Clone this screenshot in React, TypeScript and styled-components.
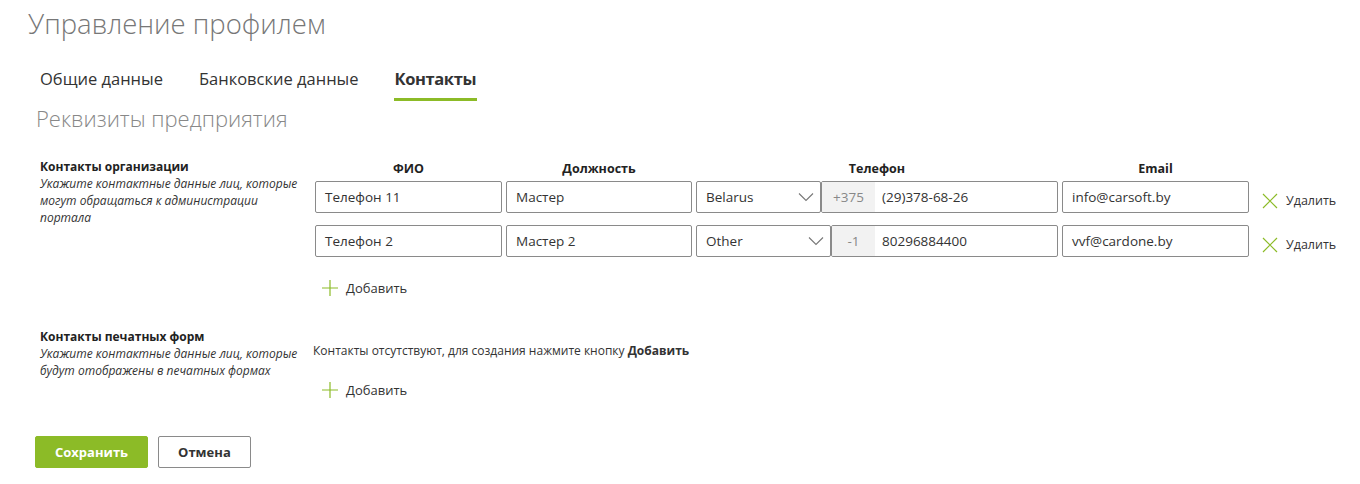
import styled, { createGlobalStyle } from "styled-components";

const GlobalStyle = createGlobalStyle`
  html, body {
    margin: 0;
    padding: 0;
    background: #fff;
    font-family: "Open Sans", "Noto Sans", sans-serif;
    color: #333;
  }
`;

const green = "#8cbb27";

interface ContactRow {
  name: string;
  position: string;
  country: string;
  code: string;
  phone: string;
  email: string;
}

const orgContacts: ContactRow[] = [
  {
    name: "Телефон 11",
    position: "Мастер",
    country: "Belarus",
    code: "+375",
    phone: "(29)378-68-26",
    email: "info@carsoft.by",
  },
  {
    name: "Телефон 2",
    position: "Мастер 2",
    country: "Other",
    code: "-1",
    phone: "80296884400",
    email: "vvf@cardone.by",
  },
];

const Page = styled.div`
  padding: 4px 0 16px 28px;
  width: 1332px;
  box-sizing: border-box;
`;

const Title = styled.h1`
  margin: 0;
  font-size: 27.5px;
  font-weight: 300;
  color: #777;
  line-height: 40px;
`;

const Tabs = styled.nav`
  display: flex;
  gap: 34px;
  margin: 21px 0 0 11px;
`;

const Tab = styled.div<{ $active?: boolean }>`
  font-size: 16.5px;
  line-height: 22px;
  padding: 3px 1px 8px;
  color: #333;
  font-weight: ${(p) => (p.$active ? 700 : 400)};
  letter-spacing: ${(p) => (p.$active ? "-0.4px" : "0")};
  border-bottom: 3px solid ${(p) => (p.$active ? green : "transparent")};
`;

const Subtitle = styled.h2`
  margin: 1px 0 0 8px;
  font-size: 22px;
  font-weight: 300;
  color: #888;
  line-height: 32px;
`;

const Section = styled.section<{ $gap: number }>`
  display: grid;
  grid-template-columns: 275px 1fr;
  margin: ${(p) => p.$gap}px 0 0 12px;
`;

const SectionInfo = styled.div`
  font-size: 12px;
  line-height: 17px;
  padding-right: 6px;
`;

const SectionName = styled.div`
  font-weight: 700;
  color: #222;
`;

const SectionHint = styled.div`
  font-style: italic;
  color: #333;
`;

const SectionBody = styled.div`
  display: flex;
  flex-direction: column;
`;

const TableGrid = styled.div`
  display: grid;
  grid-template-columns: 187px 186px 362px 187px auto;
  column-gap: 4px;
  row-gap: 12px;
  align-items: center;
`;

const HeaderCell = styled.div`
  font-size: 12.5px;
  font-weight: 700;
  text-align: center;
  color: #222;
  line-height: 17px;
  padding-top: 2px;
  margin-bottom: -8px;
`;

const Field = styled.div`
  height: 32px;
  border: 1px solid #8a8a8a;
  border-radius: 2px;
  box-sizing: border-box;
  display: flex;
  align-items: center;
  padding: 0 9px;
  font-size: 13.5px;
  color: #333;
  white-space: nowrap;
  overflow: hidden;
`;

const PhoneGroup = styled.div`
  display: flex;
  height: 32px;
`;

const Select = styled(Field)`
  flex: 1;
  justify-content: space-between;
  padding-right: 6px;
`;

const PhoneBox = styled.div`
  display: flex;
  border: 1px solid #8a8a8a;
  border-radius: 2px;
  box-sizing: border-box;
  height: 32px;
  overflow: hidden;
`;

const Prefix = styled.div`
  background: #f2f2f2;
  color: #888;
  font-size: 13.5px;
  display: flex;
  align-items: center;
  justify-content: center;
  padding: 0 11px;
  min-width: 21px;
`;

const PhoneInput = styled.div`
  width: 182px;
  display: flex;
  align-items: center;
  padding: 0 7px;
  box-sizing: border-box;
  font-size: 13.5px;
  color: #333;
`;

const LinkButton = styled.div`
  display: flex;
  align-items: center;
  gap: 8px;
  font-size: 13px;
  color: #333;
  cursor: pointer;
`;

const DeleteButton = styled(LinkButton)`
  padding: 7px 0 0 9px;
  font-size: 12.5px;
`;

const AddButton = styled(LinkButton)`
  margin: 22px 0 0 7px;
`;

const EmptyNote = styled.div`
  font-size: 12px;
  color: #333;
  margin: 14px 0 0 -2px;

  b {
    font-weight: 700;
  }
`;

const Actions = styled.div`
  display: flex;
  gap: 10px;
  margin: 37px 0 0 7px;
`;

const Button = styled.button<{ $primary?: boolean }>`
  height: 32px;
  padding: 0 19px;
  font-family: inherit;
  font-size: 13px;
  font-weight: 700;
  border-radius: 2px;
  cursor: pointer;
  background: ${(p) => (p.$primary ? green : "#fff")};
  color: ${(p) => (p.$primary ? "#fff" : "#333")};
  border: 1px solid ${(p) => (p.$primary ? green : "#8a8a8a")};
`;

const XIcon = () => (
  <svg width="16" height="16" viewBox="0 0 16 16">
    <path d="M1 1 L15 15 M15 1 L1 15" stroke={green} strokeWidth="1.2" fill="none" />
  </svg>
);

const PlusIcon = () => (
  <svg width="16" height="16" viewBox="0 0 16 16">
    <path d="M8 0 V16 M0 8 H16" stroke={green} strokeWidth="1.2" fill="none" />
  </svg>
);

const Chevron = () => (
  <svg width="16" height="10" viewBox="0 0 16 10">
    <path d="M1 1.5 L8 8.5 L15 1.5" stroke="#777" strokeWidth="1.1" fill="none" />
  </svg>
);

const App = () => {
  return (
    <>
      <GlobalStyle />
      <Page>
        <Title>Управление профилем</Title>
        <Tabs>
          <Tab>Общие данные</Tab>
          <Tab>Банковские данные</Tab>
          <Tab $active>Контакты</Tab>
        </Tabs>
        <Subtitle>Реквизиты предприятия</Subtitle>

        <Section $gap={24}>
          <SectionInfo>
            <SectionName>Контакты организации</SectionName>
            <SectionHint>
              Укажите контактные данные лиц, которые могут обращаться к
              администрации портала
            </SectionHint>
          </SectionInfo>
          <SectionBody>
            <TableGrid>
              <HeaderCell>ФИО</HeaderCell>
              <HeaderCell>Должность</HeaderCell>
              <HeaderCell>Телефон</HeaderCell>
              <HeaderCell>Email</HeaderCell>
              <div />
              {orgContacts.map((c, i) => (
                <>
                  <Field key={`n${i}`}>{c.name}</Field>
                  <Field key={`p${i}`}>{c.position}</Field>
                  <PhoneGroup key={`t${i}`}>
                    <Select>
                      {c.country}
                      <Chevron />
                    </Select>
                    <PhoneBox>
                      <Prefix>{c.code}</Prefix>
                      <PhoneInput>{c.phone}</PhoneInput>
                    </PhoneBox>
                  </PhoneGroup>
                  <Field key={`e${i}`}>{c.email}</Field>
                  <DeleteButton key={`d${i}`}>
                    <XIcon />
                    Удалить
                  </DeleteButton>
                </>
              ))}
            </TableGrid>
            <AddButton>
              <PlusIcon />
              Добавить
            </AddButton>
          </SectionBody>
        </Section>

        <Section $gap={31}>
          <SectionInfo>
            <SectionName>Контакты печатных форм</SectionName>
            <SectionHint>
              Укажите контактные данные лиц, которые будут отображены в
              печатных формах
            </SectionHint>
          </SectionInfo>
          <SectionBody>
            <EmptyNote>
              Контакты отсутствуют, для создания нажмите кнопку <b>Добавить</b>
            </EmptyNote>
            <AddButton>
              <PlusIcon />
              Добавить
            </AddButton>
          </SectionBody>
        </Section>

        <Actions>
          <Button $primary>Сохранить</Button>
          <Button>Отмена</Button>
        </Actions>
      </Page>
    </>
  );
};

export default App;
